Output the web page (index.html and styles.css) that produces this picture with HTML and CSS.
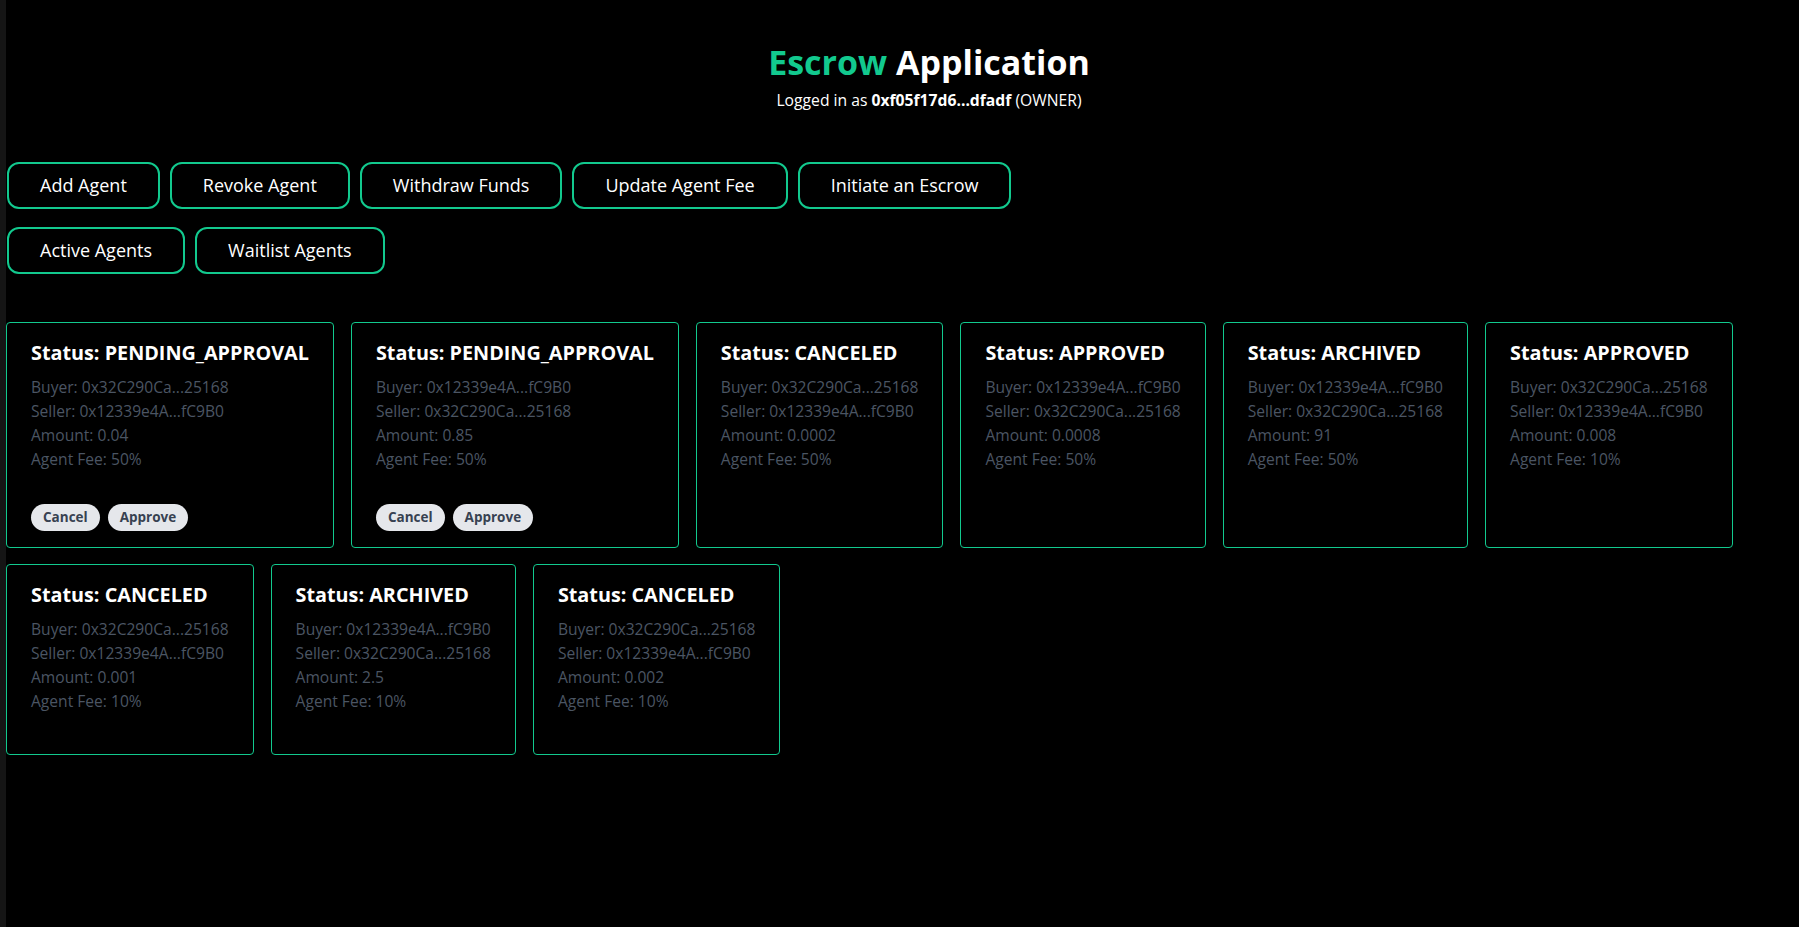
FILE: index.html
```html
<!DOCTYPE html>
<html lang="en">
<head>
<meta charset="utf-8">
<title>Escrow Application</title>
<link rel="stylesheet" href="styles.css">
</head>
<body>
<div class="app">
  <header class="header">
    <h1 class="title"><span class="accent">Escrow</span> Application</h1>
    <p class="subtitle">Logged in as <strong>0xf05f17d6...dfadf</strong> (OWNER)</p>
  </header>

  <div class="toolbar">
    <div class="btn-row">
      <button class="outline-btn">Add Agent</button>
      <button class="outline-btn">Revoke Agent</button>
      <button class="outline-btn">Withdraw Funds</button>
      <button class="outline-btn">Update Agent Fee</button>
      <button class="outline-btn">Initiate an Escrow</button>
    </div>
    <div class="btn-row">
      <button class="outline-btn">Active Agents</button>
      <button class="outline-btn">Waitlist Agents</button>
    </div>
  </div>

  <div class="cards">
    <div class="card">
      <h2 class="card-title">Status: PENDING_APPROVAL</h2>
      <div class="details">
        <p>Buyer: 0x32C290Ca...25168</p>
        <p>Seller: 0x12339e4A...fC9B0</p>
        <p>Amount: 0.04</p>
        <p>Agent Fee: 50%</p>
      </div>
      <div class="actions">
        <button class="pill">Cancel</button>
        <button class="pill">Approve</button>
      </div>
    </div>
    <div class="card">
      <h2 class="card-title">Status: PENDING_APPROVAL</h2>
      <div class="details">
        <p>Buyer: 0x12339e4A...fC9B0</p>
        <p>Seller: 0x32C290Ca...25168</p>
        <p>Amount: 0.85</p>
        <p>Agent Fee: 50%</p>
      </div>
      <div class="actions">
        <button class="pill">Cancel</button>
        <button class="pill">Approve</button>
      </div>
    </div>
    <div class="card">
      <h2 class="card-title">Status: CANCELED</h2>
      <div class="details">
        <p>Buyer: 0x32C290Ca...25168</p>
        <p>Seller: 0x12339e4A...fC9B0</p>
        <p>Amount: 0.0002</p>
        <p>Agent Fee: 50%</p>
      </div>
    </div>
    <div class="card">
      <h2 class="card-title">Status: APPROVED</h2>
      <div class="details">
        <p>Buyer: 0x12339e4A...fC9B0</p>
        <p>Seller: 0x32C290Ca...25168</p>
        <p>Amount: 0.0008</p>
        <p>Agent Fee: 50%</p>
      </div>
    </div>
    <div class="card">
      <h2 class="card-title">Status: ARCHIVED</h2>
      <div class="details">
        <p>Buyer: 0x12339e4A...fC9B0</p>
        <p>Seller: 0x32C290Ca...25168</p>
        <p>Amount: 91</p>
        <p>Agent Fee: 50%</p>
      </div>
    </div>
    <div class="card">
      <h2 class="card-title">Status: APPROVED</h2>
      <div class="details">
        <p>Buyer: 0x32C290Ca...25168</p>
        <p>Seller: 0x12339e4A...fC9B0</p>
        <p>Amount: 0.008</p>
        <p>Agent Fee: 10%</p>
      </div>
    </div>
    <div class="card">
      <h2 class="card-title">Status: CANCELED</h2>
      <div class="details">
        <p>Buyer: 0x32C290Ca...25168</p>
        <p>Seller: 0x12339e4A...fC9B0</p>
        <p>Amount: 0.001</p>
        <p>Agent Fee: 10%</p>
      </div>
    </div>
    <div class="card">
      <h2 class="card-title">Status: ARCHIVED</h2>
      <div class="details">
        <p>Buyer: 0x12339e4A...fC9B0</p>
        <p>Seller: 0x32C290Ca...25168</p>
        <p>Amount: 2.5</p>
        <p>Agent Fee: 10%</p>
      </div>
    </div>
    <div class="card">
      <h2 class="card-title">Status: CANCELED</h2>
      <div class="details">
        <p>Buyer: 0x32C290Ca...25168</p>
        <p>Seller: 0x12339e4A...fC9B0</p>
        <p>Amount: 0.002</p>
        <p>Agent Fee: 10%</p>
      </div>
    </div>
  </div>
</div>
</body>
</html>
```

FILE: styles.css
```css
* {
  box-sizing: border-box;
}

html, body {
  margin: 0;
  padding: 0;
  background: #000000;
}

body {
  font-family: "Open Sans", "Noto Sans", "DejaVu Sans", sans-serif;
  color: #ffffff;
  min-height: 927px;
  border-left: 6px solid #151515;
}

.app {
  display: flex;
  flex-direction: column;
}

.header {
  padding: 42px 0 0 53px;
  text-align: center;
}

.title {
  margin: 0;
  font-size: 34px;
  line-height: 40px;
  font-weight: 700;
  color: #ffffff;
}

.accent {
  color: #12c98e;
}

.subtitle {
  margin: 6px 0 0;
  font-size: 15.7px;
  line-height: 24px;
  color: #ffffff;
}

.subtitle strong {
  font-weight: 700;
}

.toolbar {
  display: flex;
  flex-direction: column;
  gap: 18px;
  margin-top: 50px;
  padding-left: 1px;
}

.btn-row {
  display: flex;
  gap: 10px;
}

.outline-btn {
  font-family: inherit;
  font-size: 18px;
  line-height: 27px;
  padding: 8px 31px;
  background: #000000;
  color: #ffffff;
  border: 2px solid #12c98e;
  border-radius: 12px;
  cursor: pointer;
}

.cards {
  display: flex;
  flex-wrap: wrap;
  column-gap: 17px;
  row-gap: 16px;
  margin-top: 48px;
  align-items: stretch;
}

.card {
  display: flex;
  flex-direction: column;
  align-items: flex-start;
  border: 1px solid #12c98e;
  border-radius: 4px;
  padding: 16px 24px;
  background: #000000;
}

.card-title {
  margin: 0 0 8px;
  font-size: 19.8px;
  line-height: 28px;
  font-weight: 700;
  color: #ffffff;
  white-space: nowrap;
}

.details {
  margin-bottom: 25px;
}

.details p {
  margin: 0;
  font-size: 15.6px;
  line-height: 24px;
  color: #4b5563;
  white-space: nowrap;
}

.actions {
  display: flex;
  gap: 8px;
  margin-top: 8px;
}

.pill {
  font-family: inherit;
  font-size: 13.5px;
  line-height: 19px;
  font-weight: 700;
  padding: 4px 12px;
  background: #e5e7eb;
  color: #374151;
  border: none;
  border-radius: 999px;
  cursor: pointer;
}
```
